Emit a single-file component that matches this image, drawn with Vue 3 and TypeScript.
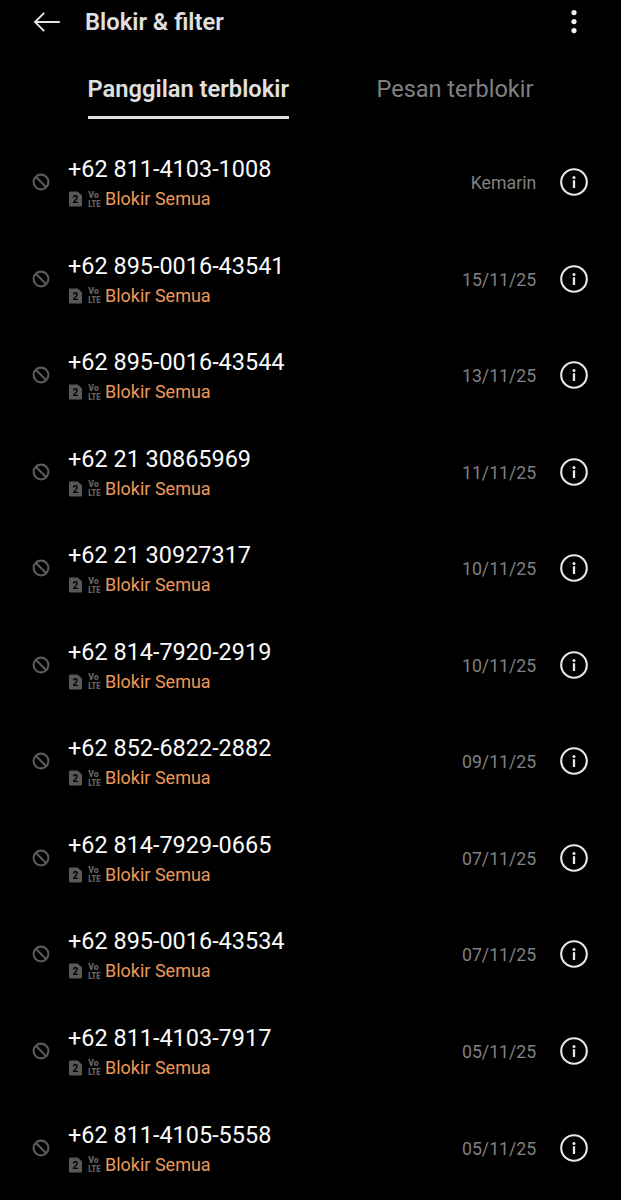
<script setup lang="ts">
interface BlockedCall {
  number: string
  date: string
}

const calls: BlockedCall[] = [
  { number: '+62 811-4103-1008', date: 'Kemarin' },
  { number: '+62 895-0016-43541', date: '15/11/25' },
  { number: '+62 895-0016-43544', date: '13/11/25' },
  { number: '+62 21 30865969', date: '11/11/25' },
  { number: '+62 21 30927317', date: '10/11/25' },
  { number: '+62 814-7920-2919', date: '10/11/25' },
  { number: '+62 852-6822-2882', date: '09/11/25' },
  { number: '+62 814-7929-0665', date: '07/11/25' },
  { number: '+62 895-0016-43534', date: '07/11/25' },
  { number: '+62 811-4103-7917', date: '05/11/25' },
  { number: '+62 811-4105-5558', date: '05/11/25' },
]
</script>

<template>
  <main class="screen">
    <header class="bar">
      <svg class="back" viewBox="0 0 28 22" fill="none" stroke="#e4e4e4" stroke-width="1.9">
        <path d="M11.2 1.8 2 11l9.2 9.2M2.2 11h24.6" />
      </svg>
      <h1 class="title">Blokir &amp; filter</h1>
      <svg class="more" viewBox="0 0 8 26" fill="#f0f0f0">
        <circle cx="4" cy="3.6" r="2.6" />
        <circle cx="4" cy="12.6" r="2.6" />
        <circle cx="4" cy="21.6" r="2.6" />
      </svg>
    </header>
    <nav class="tabs">
      <span class="tab active">Panggilan terblokir</span>
      <span class="tab second">Pesan terblokir</span>
    </nav>
    <ul class="list">
      <li v-for="call in calls" :key="call.number" class="row">
        <svg class="ban" viewBox="0 0 18 18" fill="none" stroke="#5a5a5a" stroke-width="2.1">
          <circle cx="9" cy="9" r="7.4" />
          <path d="m3.8 3.8 10.4 10.4" />
        </svg>
        <div class="info">
          <div class="number">{{ call.number }}</div>
          <div class="meta">
            <svg class="sim" viewBox="0 0 13 16">
              <path d="M1.2.5h7.5L13 4.6v9.7q0 1.2-1.2 1.2H1.2Q0 15.5 0 14.3V1.7Q0 .5 1.2.5Z" fill="#585858" />
              <text x="6.4" y="11.8" text-anchor="middle" class="simtext">2</text>
            </svg>
            <svg class="volte" viewBox="0 0 13 17">
              <text x="0.2" y="7" textLength="10.4" lengthAdjust="spacingAndGlyphs">Vo</text>
              <text x="0.2" y="16" textLength="12.2" lengthAdjust="spacingAndGlyphs">LTE</text>
            </svg>
            <span class="reason">Blokir Semua</span>
          </div>
        </div>
        <span class="date">{{ call.date }}</span>
        <svg class="details" viewBox="0 0 30 30">
          <circle cx="15" cy="15" r="12.8" fill="none" stroke="#e8e8e8" stroke-width="2.1" />
          <circle cx="15" cy="10.4" r="1.5" fill="#e8e8e8" />
          <path d="M15 13.2v7.8" stroke="#e8e8e8" stroke-width="2.3" />
        </svg>
      </li>
    </ul>
  </main>
</template>

<style>
body {
  margin: 0;
  background: #000;
}
</style>

<style scoped>
.screen {
  box-sizing: border-box;
  width: 621px;
  height: 1200px;
  overflow: hidden;
  background: #000;
  font-family: Roboto, sans-serif;
}
.bar {
  display: flex;
  align-items: center;
  height: 43px;
  padding: 0 43px 0 33px;
}
.back {
  width: 28px;
  height: 22px;
}
.title {
  flex: 1;
  margin: 0 0 0 24px;
  color: #e0e0e0;
  font-size: 23.75px;
  font-weight: 600;
  line-height: 28px;
}
.more {
  width: 8px;
  height: 26px;
}
.tabs {
  display: flex;
  align-items: flex-start;
  box-sizing: border-box;
  height: 90.8px;
  padding: 31px 0 0 87.5px;
}
.tab {
  box-sizing: border-box;
  height: 45.4px;
  font-size: 23.5px;
  line-height: 30px;
  white-space: nowrap;
}
.active {
  width: 201px;
  color: #e0e0e0;
  font-size: 23.7px;
  font-weight: 600;
  border-bottom: 3px solid #e0e0e0;
}
.second {
  margin-left: 88px;
  color: #808080;
}
.list {
  margin: 0;
  padding: 0;
  list-style: none;
}
.row {
  display: flex;
  align-items: center;
  box-sizing: border-box;
  height: 96.55px;
  padding: 0 32px;
}
.ban {
  width: 18px;
  height: 18px;
}
.info {
  flex: 1;
  margin: 2px 0 0 18px;
}
.number {
  color: #fafafa;
  font-size: 23.45px;
  line-height: 30px;
  white-space: nowrap;
}
.meta {
  display: flex;
  align-items: center;
  height: 26px;
  margin-top: 2px;
}
.sim {
  width: 13px;
  height: 16px;
  margin-left: 1px;
}
.simtext {
  fill: #000;
  font-size: 10px;
  font-weight: 700;
}
.volte {
  overflow: visible;
  width: 13px;
  height: 17px;
  margin-left: 6px;
  fill: #646464;
  font-size: 9.6px;
  font-weight: 900;
}
.reason {
  margin-left: 4px;
  color: #ee9858;
  font-size: 18px;
  line-height: 26px;
  white-space: nowrap;
}
.date {
  margin-top: 2px;
  color: #808080;
  font-size: 17.7px;
  line-height: 24px;
}
.details {
  width: 30px;
  height: 30px;
  margin-left: 22.8px;
}
</style>
